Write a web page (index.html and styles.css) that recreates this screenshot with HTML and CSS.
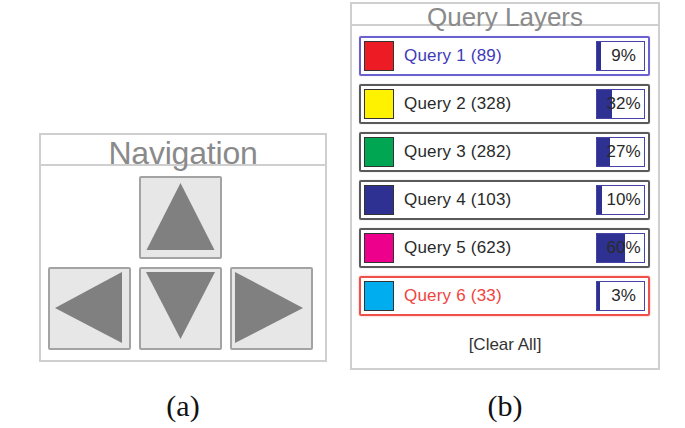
FILE: index.html
```html
<!DOCTYPE html>
<html>
<head>
<meta charset="utf-8">
<link rel="stylesheet" href="styles.css">
</head>
<body>
<div class="figure">
  <div class="panels">
    <div class="nav">
      <div class="nav-title">Navigation</div>
      <div class="nav-grid">
        <div class="btn btn-up"><svg viewBox="0 0 79 79"><polygon points="39.5,5 5.5,72 73.5,72"/></svg></div>
        <div class="btn btn-left"><svg viewBox="0 0 79 79"><polygon points="5,39 72,3 72,74"/></svg></div>
        <div class="btn btn-down"><svg viewBox="0 0 79 79"><polygon points="5,3 74,3 39.5,70"/></svg></div>
        <div class="btn btn-right"><svg viewBox="0 0 79 79"><polygon points="3,3 3,74 71,39"/></svg></div>
      </div>
    </div>
    <div class="layers">
      <div class="layers-title">Query Layers</div>
      <div class="rows">
        <div class="row row-active">
          <span class="swatch swatch-red"></span>
          <span class="label label-blue">Query 1 (89)</span>
          <span class="pct"><span class="pct-fill" style="width:9%"></span><span class="pct-text">9%</span></span>
        </div>
        <div class="row">
          <span class="swatch swatch-yellow"></span>
          <span class="label">Query 2 (328)</span>
          <span class="pct"><span class="pct-fill" style="width:32%"></span><span class="pct-text">32%</span></span>
        </div>
        <div class="row">
          <span class="swatch swatch-green"></span>
          <span class="label">Query 3 (282)</span>
          <span class="pct"><span class="pct-fill" style="width:27%"></span><span class="pct-text">27%</span></span>
        </div>
        <div class="row">
          <span class="swatch swatch-navy"></span>
          <span class="label">Query 4 (103)</span>
          <span class="pct"><span class="pct-fill" style="width:10%"></span><span class="pct-text">10%</span></span>
        </div>
        <div class="row">
          <span class="swatch swatch-magenta"></span>
          <span class="label">Query 5 (623)</span>
          <span class="pct"><span class="pct-fill" style="width:60%"></span><span class="pct-text">60%</span></span>
        </div>
        <div class="row row-hover">
          <span class="swatch swatch-cyan"></span>
          <span class="label label-red">Query 6 (33)</span>
          <span class="pct"><span class="pct-fill" style="width:3%"></span><span class="pct-text">3%</span></span>
        </div>
      </div>
      <div class="clear">[Clear All]</div>
    </div>
  </div>
  <div class="captions">
    <div class="cap cap-a">(a)</div>
    <div class="cap cap-b">(b)</div>
  </div>
</div>
</body>
</html>
```

FILE: styles.css
```css
* { box-sizing: border-box; }
html, body { margin: 0; padding: 0; background: #fff; }
body { width: 685px; height: 428px; overflow: hidden; font-family: "Liberation Sans", Arial, sans-serif; }

.figure { display: flex; flex-direction: column; }
.panels { display: flex; align-items: flex-start; padding-top: 2px; padding-left: 39px; }

/* Navigation */
.nav {
  width: 288px;
  margin-top: 131px;
  border: 2px solid #cfcfcf;
}
.nav-title {
  height: 31px;
  line-height: 37px;
  text-align: center;
  font-size: 32px;
  letter-spacing: -0.2px;
  color: #8a8a8a;
  border-bottom: 2px solid #cfcfcf;
}
.nav-grid {
  display: grid;
  grid-template-columns: 83px 83px 83px;
  grid-template-rows: 83px 83px;
  gap: 8px;
  padding: 10px 0 10px 7px;
}
.btn {
  background: #e7e7e7;
  border: 2px solid #a3a3a3;
  border-radius: 2px;
}
.btn svg { display: block; width: 79px; height: 79px; }
.btn polygon { fill: #808080; }
.btn-up { grid-column: 2; grid-row: 1; }
.btn-left { grid-column: 1; grid-row: 2; }
.btn-down { grid-column: 2; grid-row: 2; }
.btn-right { grid-column: 3; grid-row: 2; }

/* Query layers */
.layers {
  width: 310px;
  margin-left: 23px;
  border: 2px solid #cfcfcf;
  padding-bottom: 13px;
}
.layers-title {
  height: 22px;
  line-height: 27px;
  text-align: center;
  font-size: 26px;
  color: #8a8a8a;
  border-bottom: 2px solid #cfcfcf;
}
.rows {
  display: flex;
  flex-direction: column;
  gap: 8px;
  padding: 10px 8px 0 7px;
}
.row {
  height: 40px;
  display: flex;
  align-items: center;
  border: 2px solid #5a5a5a;
  border-radius: 2px;
  padding: 0 3px;
  box-shadow: 0 0 1px #9a9a9a;
}
.row-active { border-color: #6b62cf; box-shadow: 0 0 1px #a9a3e8; }
.row-hover { border-color: #f0504a; box-shadow: 0 0 2px #f7a09a; }

.swatch {
  width: 30px;
  height: 30px;
  border: 1.5px solid #333;
  flex: none;
}
.swatch-red { background: #ed1c24; }
.swatch-yellow { background: #fff200; }
.swatch-green { background: #00a651; }
.swatch-navy { background: #2e3192; }
.swatch-magenta { background: #ec008c; }
.swatch-cyan { background: #00aeef; }

.label {
  margin-left: 10px;
  font-size: 17px;
  letter-spacing: 0.2px;
  color: #2a2a2a;
  flex: 1;
}
.label-blue { color: #3f3bb8; }
.label-red { color: #f04440; }

.pct {
  position: relative;
  width: 49px;
  height: 30px;
  border: 1.5px solid #4643a6;
  flex: none;
  display: flex;
  align-items: center;
  justify-content: center;
  padding-left: 6px;
  overflow: hidden;
}
.pct-fill {
  position: absolute;
  left: 0;
  top: 0;
  bottom: 0;
  background: #2e3192;
  min-width: 3px;
}
.pct-text {
  position: relative;
  font-size: 17px;
  color: #2a2a2a;
}

.clear {
  margin-top: 19px;
  height: 20px;
  line-height: 20px;
  text-align: center;
  font-size: 17px;
  color: #333;
}

/* Captions */
.captions { display: flex; padding-left: 39px; margin-top: 20px; }
.cap {
  font-family: "Liberation Serif", "Times New Roman", serif;
  font-size: 30px;
  line-height: 32px;
  text-align: center;
  color: #111;
}
.cap-a { width: 288px; }
.cap-b { width: 310px; margin-left: 23px; }
```
